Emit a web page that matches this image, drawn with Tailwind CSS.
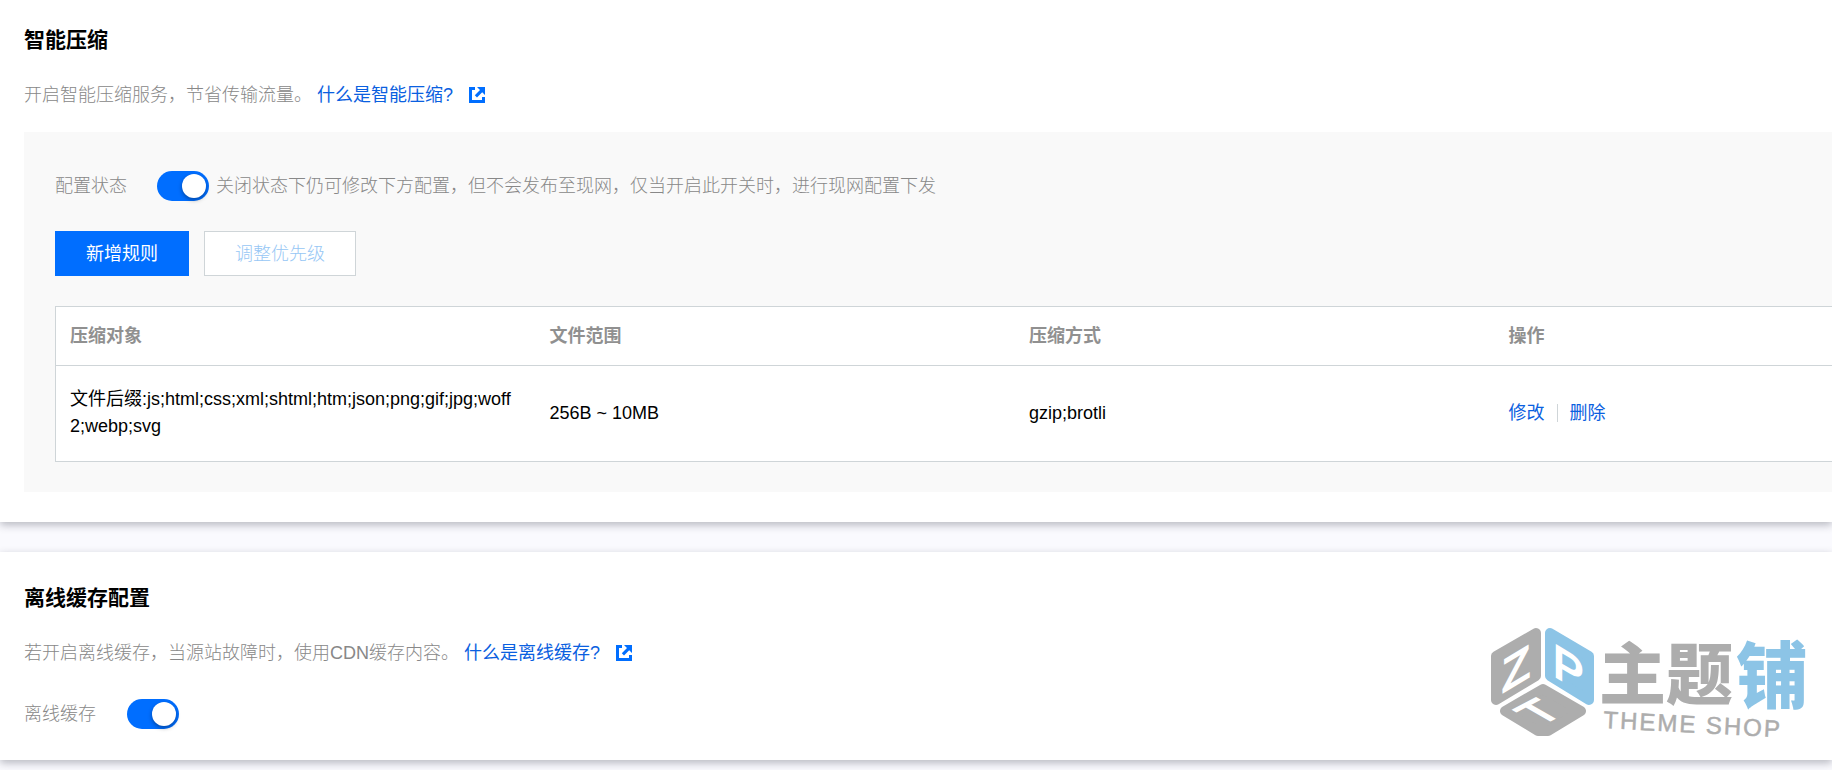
<!DOCTYPE html>
<html lang="zh-CN">
<head>
    <meta charset="UTF-8">
    <meta name="viewport" content="width=device-width, initial-scale=1.0">
    <title>CDN 高级配置</title>
    <script src="https://cdn.jsdelivr.net/npm/@tailwindcss/browser@4"></script>
</head>
<body class="min-h-screen overflow-x-hidden bg-[#fafafe] font-['Liberation_Sans','Noto_Sans_CJK_SC',sans-serif] text-lg text-black">

    <!-- Smart compression -->
    <section class="bg-white pt-6 pb-[30px] pl-6 shadow-[0_3px_8px_rgba(30,34,50,0.3)]">
        <h2 class="text-[21px] leading-8 font-bold">智能压缩</h2>
        <p class="mt-[25px] flex items-center leading-7 font-light text-[#888]">
            开启智能压缩服务，节省传输流量。
            <a href="#" class="ml-[5px] flex items-center gap-4 font-normal text-[#0a60e0]">什么是智能压缩?
                <svg class="size-4" viewBox="0 0 16 16" fill="#006eff" aria-hidden="true">
                    <path d="M0 0h6v3H3v10h10v-3h3v6H0zM8 0h8v8l-2.800-2.800-5.200 5.200-2.200-2.200 5.200-5.200z"/>
                </svg>
            </a>
        </p>

        <div class="mt-[23px] bg-[#f9f9f9] pt-[38px] pb-[30px] pl-[31px]">
            <div class="flex items-center leading-8 font-light text-[#888]">
                <label for="compress-switch">配置状态</label>
                <input id="compress-switch" type="checkbox" role="switch" checked class="relative ml-[30px] h-[30px] w-[52px] appearance-none rounded-full bg-gray-300 checked:bg-[#006eff] before:absolute before:top-[3px] before:right-[3px] before:size-6 before:rounded-full before:bg-white before:shadow-[0_2px_4px_rgba(0,0,0,0.35)]">
                <span class="ml-[7px]">关闭状态下仍可修改下方配置，但不会发布至现网，仅当开启此开关时，进行现网配置下发</span>
            </div>

            <div class="mt-[29px] flex gap-[15px]">
                <button class="h-[45px] border border-[#006eff] bg-[#006eff] px-[30px] font-normal text-white">新增规则</button>
                <button disabled class="h-[45px] border border-[#cfd5d8] bg-white px-[30px] font-light text-[#97c7f5]">调整优先级</button>
            </div>

            <div class="mt-[30px] border border-r-0 border-[#cfd5d8] bg-white">
                <table class="w-full table-fixed text-left">
                    <thead>
                        <tr class="h-[58px] border-b border-[#cfd5d8] text-[#909090]">
                            <th class="w-[27%] px-3.5 font-bold">压缩对象</th>
                            <th class="w-[27%] px-3.5 font-bold">文件范围</th>
                            <th class="w-[27%] px-3.5 font-bold">压缩方式</th>
                            <th class="px-3.5 font-bold">操作</th>
                        </tr>
                    </thead>
                    <tbody>
                        <tr class="h-24 leading-[27px]">
                            <td class="px-3.5 break-all">文件后缀:js;html;css;xml;shtml;htm;json;png;gif;jpg;woff2;webp;svg</td>
                            <td class="px-3.5">256B ~ 10MB</td>
                            <td class="px-3.5">gzip;brotli</td>
                            <td class="px-3.5">
                                <div class="flex items-center gap-3 text-[#0a60e0]">
                                    <a href="#">修改</a>
                                    <span class="h-[18px] w-px bg-[#cfd5d8]"></span>
                                    <a href="#">删除</a>
                                </div>
                            </td>
                        </tr>
                    </tbody>
                </table>
            </div>
        </div>
    </section>

    <!-- Offline cache -->
    <section class="mt-[30px] flex items-end justify-between bg-white pt-[30px] pl-6 shadow-[0_3px_8px_rgba(30,34,50,0.3)]">
        <div class="pb-[30px]">
            <h2 class="text-[21px] leading-8 font-bold">离线缓存配置</h2>
            <p class="mt-[25px] flex items-center leading-7 font-light text-[#888]">
                若开启离线缓存，当源站故障时，使用CDN缓存内容。
                <a href="#" class="ml-[5px] flex items-center gap-4 font-normal text-[#0a60e0]">什么是离线缓存?
                    <svg class="size-4" viewBox="0 0 16 16" fill="#006eff" aria-hidden="true">
                        <path d="M0 0h6v3H3v10h10v-3h3v6H0zM8 0h8v8l-2.800-2.800-5.200 5.200-2.200-2.200 5.200-5.200z"/>
                    </svg>
                </a>
            </p>
            <div class="mt-[31px] flex items-center leading-8 font-light text-[#888]">
                <label for="offline-switch">离线缓存</label>
                <input id="offline-switch" type="checkbox" role="switch" checked class="relative ml-[31px] h-[30px] w-[52px] appearance-none rounded-full bg-gray-300 checked:bg-[#006eff] before:absolute before:top-[3px] before:right-[3px] before:size-6 before:rounded-full before:bg-white before:shadow-[0_2px_4px_rgba(0,0,0,0.35)]">
            </div>
        </div>

        <!-- Theme Shop logo -->
        <svg class="mr-6 mb-[18px] h-[120px] w-[320px] shrink-0 overflow-visible" viewBox="0 0 320 120" role="img" aria-label="主题铺 THEME SHOP">
            <g stroke-width="10" stroke-linejoin="round">
                <path d="M8 34L48 11V54L8 78Z" fill="#adadad" stroke="#adadad"/>
                <path d="M62 11L101 34V78L62 54Z" fill="#8cc4e6" stroke="#8cc4e6"/>
                <path d="M17 89L55 67L93 89L60 109H50Z" fill="#adadad" stroke="#adadad"/>
            </g>
            <g fill="#fff" stroke="#fff" font-size="46">
                <text transform="translate(14 71) skewY(-31)" stroke-width="2">Z</text>
                <text transform="translate(65 53) skewY(31)" stroke-width="2">P</text>
                <text transform="matrix(0.87 -0.45 0.87 0.5 52 104)" stroke-width="2">T</text>
            </g>
            <g font-family="'Noto Sans CJK SC', sans-serif" font-weight="900">
                <text x="111" y="77" font-size="67" fill="#adadad">主题</text>
                <text x="248" y="80" font-size="72" fill="#8cc4e6">铺</text>
            </g>
            <text transform="translate(115 106) rotate(3)" font-size="24" letter-spacing="2" fill="#adadad" stroke="#adadad" stroke-width="0.5">THEME SHOP</text>
        </svg>
    </section>

</body>
</html>
